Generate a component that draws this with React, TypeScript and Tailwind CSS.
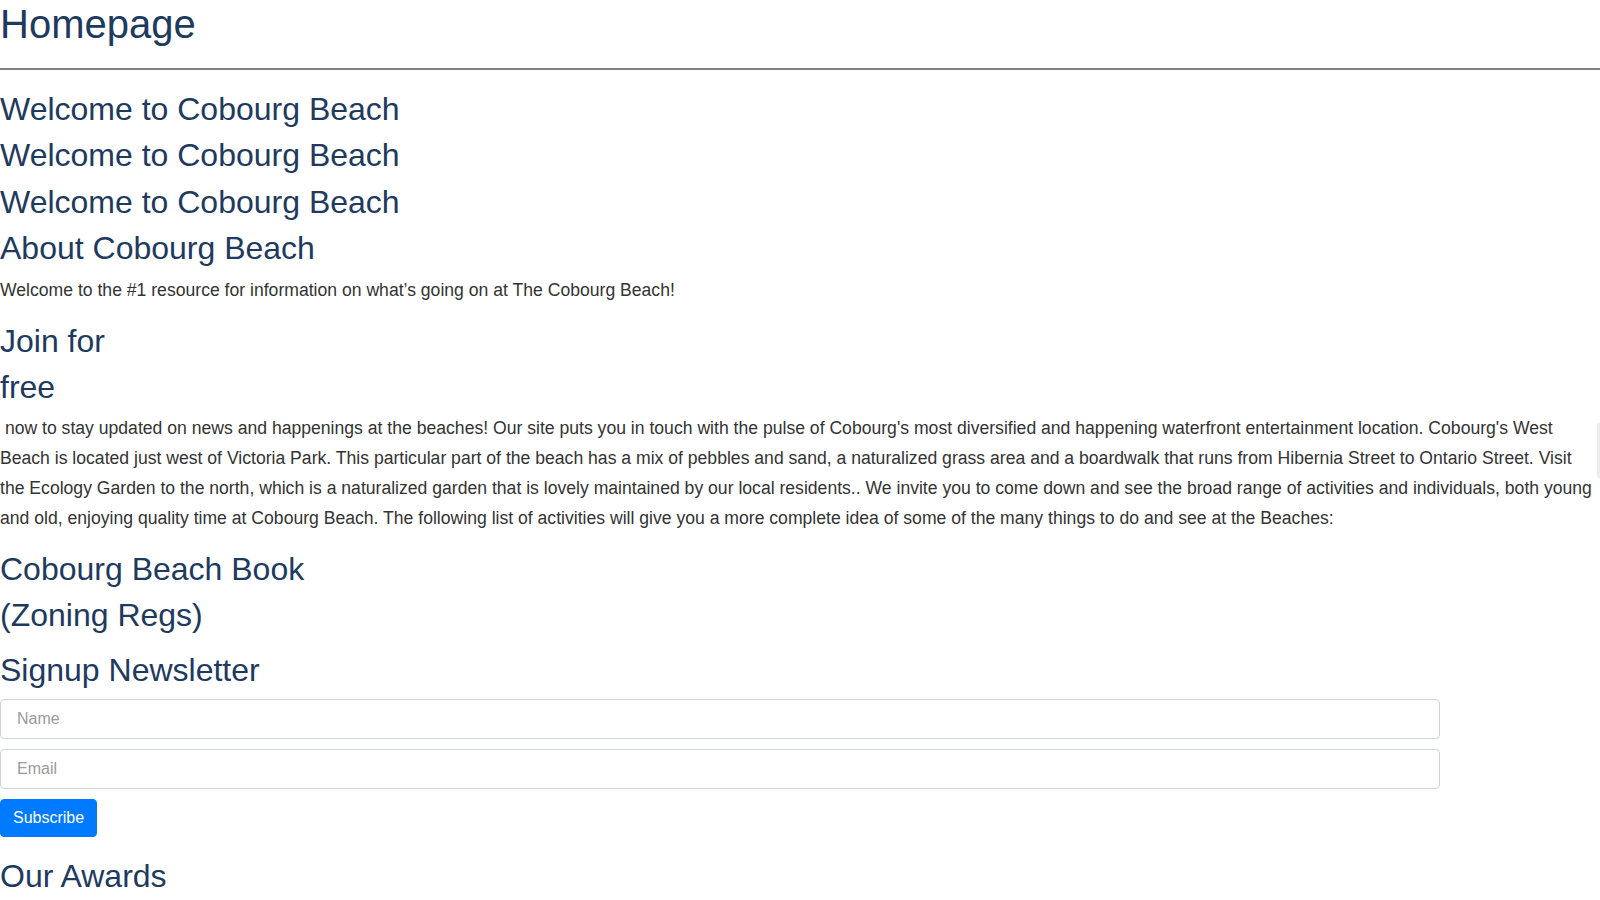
import React from "react";

const heading = "m-0 font-normal text-[32px] leading-[38.4px] text-[#1e3a5f]";
const body = "m-0 mb-[16px] text-[17.6px] leading-[29.92px]";
const field =
  "box-border w-[1440px] h-[40px] px-[16px] border border-[#ced4da] rounded-[4px] text-[16px] text-[#495057] bg-white placeholder:text-[#9a9a9a] outline-none";

export default function App() {
  return (
    <div className="relative w-full font-['Liberation_Sans',Arial,sans-serif] text-[#333] bg-white">
      <h1 className="m-0 font-normal text-[40px] leading-[48px] text-[#1e3a5f]">Homepage</h1>
      <hr className="mt-[20px] mb-0 border-0 border-t-2 border-[#808080]" />

      <div className="mt-[20px]">
        <h2 className={`${heading} mb-[8px]`}>Welcome to Cobourg Beach</h2>
        <h2 className={`${heading} mb-[8px]`}>Welcome to Cobourg Beach</h2>
        <h2 className={`${heading} mb-[8px]`}>Welcome to Cobourg Beach</h2>
      </div>

      <section>
        <h2 className={`${heading} mb-[8px]`}>About Cobourg Beach</h2>
        <p className={body}>
          Welcome to the #1 resource for information on what’s going on at The Cobourg Beach!
        </p>
      </section>

      <section>
        <h2 className={`${heading} mb-[8px]`}>Join for</h2>
        <h2 className={`${heading} mb-[8px]`}>free</h2>
        <p className={body}>
          {"\u00a0"}now to stay updated on news and happenings at the beaches! Our site puts you in touch
          with the pulse of Cobourg's most diversified and happening waterfront entertainment location.
          Cobourg's West Beach is located just west of Victoria Park. This particular part of the beach has
          a mix of pebbles and sand, a naturalized grass area and a boardwalk that runs from Hibernia Street
          to Ontario Street. Visit the Ecology Garden to the north, which is a naturalized garden that is
          lovely maintained by our local residents.. We invite you to come down and see the broad range of
          activities and individuals, both young and old, enjoying quality time at Cobourg Beach. The
          following list of activities will give you a more complete idea of some of the many things to do
          and see at the Beaches:
        </p>
      </section>

      <section>
        <h2 className={`${heading} mb-[8px]`}>Cobourg Beach Book</h2>
        <h2 className={`${heading} mb-[16px]`}>(Zoning Regs)</h2>
      </section>

      <section>
        <h2 className={`${heading} mb-[10px]`}>Signup Newsletter</h2>
        <form className="flex flex-col items-start gap-[10px]" onSubmit={(e) => e.preventDefault()}>
          <input type="text" placeholder="Name" className={field} />
          <input type="email" placeholder="Email" className={field} />
          <button
            type="submit"
            className="box-border h-[38px] px-[12px] border border-[#007bff] rounded-[4px] bg-[#007bff] text-white text-[16px] leading-[24px]"
          >
            Subscribe
          </button>
        </form>
      </section>

      <h2 className={`${heading} mt-[20px] mb-0`}>Our Awards</h2>

      {/* edge of a floating side widget peeking in from the right */}
      <div className="absolute right-0 top-[423px] w-[3px] h-[55px] bg-[#ededed] rounded-l-[2px]" />
    </div>
  );
}
